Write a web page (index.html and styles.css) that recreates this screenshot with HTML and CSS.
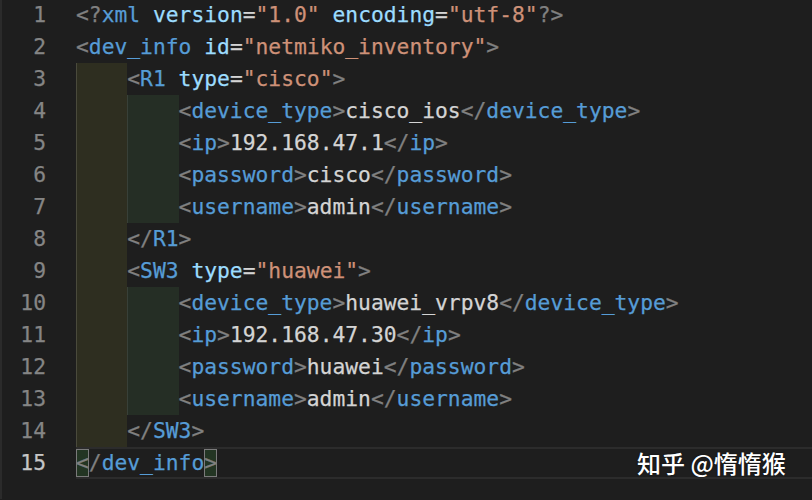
FILE: index.html
```html
<!DOCTYPE html>
<html>
<head>
<meta charset="utf-8">
<link rel="stylesheet" href="styles.css">
</head>
<body>
<div class="editor">
  <div class="gutter">
    <div class="ln">1</div><div class="ln">2</div><div class="ln">3</div><div class="ln">4</div><div class="ln">5</div>
    <div class="ln">6</div><div class="ln">7</div><div class="ln">8</div><div class="ln">9</div><div class="ln">10</div>
    <div class="ln">11</div><div class="ln">12</div><div class="ln">13</div><div class="ln">14</div><div class="ln cur">15</div>
  </div>
  <div class="code">
    <div class="line"><span class="p">&lt;?</span><span class="t">xml</span> <span class="a">version</span>=<span class="s">"1.0"</span> <span class="a">encoding</span>=<span class="s">"utf-8"</span><span class="p">?&gt;</span></div>
    <div class="line"><span class="p">&lt;</span><span class="t">dev_info</span> <span class="a">id</span>=<span class="s">"netmiko_inventory"</span><span class="p">&gt;</span></div>
    <div class="line"><span class="ind i1"></span><span class="p">&lt;</span><span class="t">R1</span> <span class="a">type</span>=<span class="s">"cisco"</span><span class="p">&gt;</span></div>
    <div class="line"><span class="ind i1"></span><span class="ind i2"></span><span class="p">&lt;</span><span class="t">device_type</span><span class="p">&gt;</span>cisco_ios<span class="p">&lt;/</span><span class="t">device_type</span><span class="p">&gt;</span></div>
    <div class="line"><span class="ind i1"></span><span class="ind i2"></span><span class="p">&lt;</span><span class="t">ip</span><span class="p">&gt;</span>192.168.47.1<span class="p">&lt;/</span><span class="t">ip</span><span class="p">&gt;</span></div>
    <div class="line"><span class="ind i1"></span><span class="ind i2"></span><span class="p">&lt;</span><span class="t">password</span><span class="p">&gt;</span>cisco<span class="p">&lt;/</span><span class="t">password</span><span class="p">&gt;</span></div>
    <div class="line"><span class="ind i1"></span><span class="ind i2"></span><span class="p">&lt;</span><span class="t">username</span><span class="p">&gt;</span>admin<span class="p">&lt;/</span><span class="t">username</span><span class="p">&gt;</span></div>
    <div class="line"><span class="ind i1"></span><span class="p">&lt;/</span><span class="t">R1</span><span class="p">&gt;</span></div>
    <div class="line"><span class="ind i1"></span><span class="p">&lt;</span><span class="t">SW3</span> <span class="a">type</span>=<span class="s">"huawei"</span><span class="p">&gt;</span></div>
    <div class="line"><span class="ind i1"></span><span class="ind i2"></span><span class="p">&lt;</span><span class="t">device_type</span><span class="p">&gt;</span>huawei_vrpv8<span class="p">&lt;/</span><span class="t">device_type</span><span class="p">&gt;</span></div>
    <div class="line"><span class="ind i1"></span><span class="ind i2"></span><span class="p">&lt;</span><span class="t">ip</span><span class="p">&gt;</span>192.168.47.30<span class="p">&lt;/</span><span class="t">ip</span><span class="p">&gt;</span></div>
    <div class="line"><span class="ind i1"></span><span class="ind i2"></span><span class="p">&lt;</span><span class="t">password</span><span class="p">&gt;</span>huawei<span class="p">&lt;/</span><span class="t">password</span><span class="p">&gt;</span></div>
    <div class="line"><span class="ind i1"></span><span class="ind i2"></span><span class="p">&lt;</span><span class="t">username</span><span class="p">&gt;</span>admin<span class="p">&lt;/</span><span class="t">username</span><span class="p">&gt;</span></div>
    <div class="line"><span class="ind i1"></span><span class="p">&lt;/</span><span class="t">SW3</span><span class="p">&gt;</span></div>
    <div class="line current"><span class="p match">&lt;</span><span class="p">/</span><span class="t">dev_info</span><span class="p match">&gt;</span></div>
  </div>
  <div class="watermark">知乎 @惰惰猴</div>
</div>
</body>
</html>
```

FILE: styles.css
```css
html, body {
  margin: 0;
  padding: 0;
  background: #1e1e1e;
}
.editor {
  position: relative;
  display: flex;
  width: 812px;
  height: 500px;
  overflow: hidden;
  background: #1e1e1e;
  border-left: 2px solid #2b2b2b;
  box-sizing: border-box;
  font-family: "DejaVu Sans Mono", monospace;
  font-size: 21.3px;
  -webkit-text-stroke: 0.25px;
  margin-top: -1px;
}
.gutter {
  width: 74px;
  flex: none;
}
.ln {
  height: 32px;
  line-height: 32px;
  text-align: right;
  padding-right: 30px;
  color: #858585;
  box-sizing: border-box;
  width: 74px;
}
.ln.cur { color: #c6c6c6; }
.code {
  flex: 1;
  color: #d4d4d4;
}
.line {
  display: block;
  height: 32px;
  line-height: 32px;
  white-space: pre;
  box-sizing: border-box;
}
.ind {
  display: inline-block;
  vertical-align: top;
  width: 4ch;
  height: 32px;
}
.i1 {
  background: #2e2e20;
  box-shadow: inset 1px 0 0 #4a4a3c;
}
.i2 {
  background: #252e25;
  box-shadow: inset 1px 0 0 #384038;
}
.p { color: #808080; }
.t { color: #569cd6; }
.a { color: #9cdcfe; }
.s { color: #ce9178; }
.current {
  border-top: 2px solid #2c2c2c;
  border-bottom: 2px solid #2c2c2c;
  line-height: 28px;
}
.match {
  display: inline-block;
  vertical-align: top;
  height: 28px;
  background: #233523;
  outline: 1px solid #7a7a7a;
  outline-offset: -1px;
}
.watermark {
  position: absolute;
  left: 635px;
  top: 448px;
  color: #ffffff;
  font-family: "Noto Sans CJK SC", sans-serif;
  font-size: 24px;
  font-weight: 500;
  line-height: 32px;
  -webkit-text-stroke: 0;
  text-shadow: 0 0 2px rgba(0,0,0,0.6);
}
```
